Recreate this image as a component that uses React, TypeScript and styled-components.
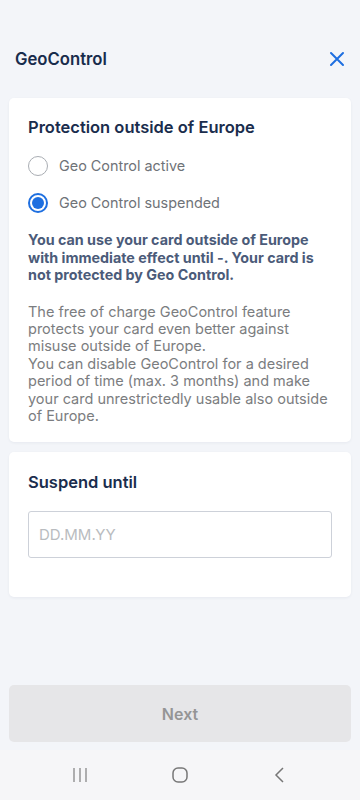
import styled, { createGlobalStyle } from 'styled-components'

const GlobalStyle = createGlobalStyle`
  html, body {
    margin: 0;
    padding: 0;
    background: #f3f5f9;
  }

  body {
    font-family: Inter, 'Noto Sans', sans-serif;
  }
`

const Screen = styled.div`
  display: flex;
  flex-direction: column;

  height: 800px;
  width: 360px;

  background: #f3f5f9;
`

const StatusBar = styled.div`
  height: 37px;
`

const Header = styled.header`
  display: flex;
  justify-content: space-between;
  align-items: center;

  padding: 0 14px 0 15px;

  height: 44px;
`

const HeaderTitle = styled.h1`
  margin: 0;

  font: 600 16.7px Inter, sans-serif;
  color: #182c4c;
`

const CloseButton = styled.button`
  display: flex;

  border: 0;
  padding: 0;

  background: none;
`

const Content = styled.main`
  display: flex;
  flex-direction: column;
  gap: 10px;

  padding: 17px 9px 0;

  flex: 1;
`

const Card = styled.section`
  border-radius: 5px;

  padding: 18px 19px 18px;

  background: #fff;
  box-shadow: 0 1px 3px rgba(30, 50, 90, 0.06);
`

const CardTitle = styled.h2<{ gap: number }>`
  margin: 0 0 ${(props) => props.gap}px;

  font: 600 16.5px/22px Inter, sans-serif;
  color: #1a2d4d;
`

const RadioRow = styled.label`
  display: flex;
  align-items: center;
  gap: 11px;

  height: 37px;

  font: 400 14.4px Inter, sans-serif;
  color: #6f7378;
`

const RadioCircle = styled.span<{ checked: boolean }>`
  box-sizing: border-box;
  display: flex;
  justify-content: center;
  align-items: center;

  border: ${(props) => (props.checked ? '2px solid #1e6fe0' : '1.5px solid #a9adb3')};
  border-radius: 50%;

  height: 20px;
  width: 20px;

  &::after {
    content: '';

    display: ${(props) => (props.checked ? 'block' : 'none')};

    border-radius: 50%;

    height: 12px;
    width: 12px;

    background: #1e6fe0;
  }
`

const Notice = styled.p`
  margin: 10px 0 0;

  font: 700 14.3px/17.5px Inter, sans-serif;
  color: #4b5b79;
`

const Description = styled.p`
  margin: 19px 0 0;

  font: 400 14.5px/17.4px Inter, sans-serif;
  color: #7b7d80;
`

const SuspendCard = styled(Card)`
  padding: 19px 19px 39px;
`

const DateInput = styled.input`
  box-sizing: border-box;

  border: 1px solid #cdd1d9;
  border-radius: 3px;
  padding: 0 10px;

  height: 47px;
  width: 100%;

  font: 400 15px Inter, sans-serif;
  color: #333;

  background: #fff;

  &::placeholder {
    color: #b9bcc0;
  }
`

const Footer = styled.div`
  padding: 0 9px 8px;
`

const NextButton = styled.button`
  border: 0;
  border-radius: 5px;

  height: 57px;
  width: 100%;

  font: 600 16px Inter, sans-serif;
  color: #959595;

  background: #e6e6e8;
`

const NavBar = styled.nav`
  display: flex;
  justify-content: space-around;
  align-items: center;

  padding: 0 30px;

  height: 50px;

  background: #f6f6f8;
`

const NavIcon = styled.span`
  display: flex;
  justify-content: center;

  width: 40px;
`

export const App = () => {
  return (
    <Screen>
      <GlobalStyle />
      <StatusBar />
      <Header>
        <HeaderTitle>GeoControl</HeaderTitle>
        <CloseButton aria-label="Close">
          <svg width="18" height="18" viewBox="0 0 18 18">
            <path d="M3 3 L15 15 M15 3 L3 15" stroke="#1e6fe0" strokeWidth="2" strokeLinecap="round" />
          </svg>
        </CloseButton>
      </Header>
      <Content>
        <Card>
          <CardTitle gap={9}>Protection outside of Europe</CardTitle>
          <RadioRow>
            <RadioCircle checked={false} />
            Geo Control active
          </RadioRow>
          <RadioRow>
            <RadioCircle checked />
            Geo Control suspended
          </RadioRow>
          <Notice>
            You can use your card outside of Europe with immediate effect until -. Your card is not
            protected by Geo Control.
          </Notice>
          <Description>
            The free of charge GeoControl feature protects your card even better against misuse
            outside of Europe.
            <br />
            You can disable GeoControl for a desired period of time (max. 3 months) and make your
            card unrestrictedly usable also outside of Europe.
          </Description>
        </Card>
        <SuspendCard>
          <CardTitle gap={18}>Suspend until</CardTitle>
          <DateInput placeholder="DD.MM.YY" />
        </SuspendCard>
      </Content>
      <Footer>
        <NextButton disabled>Next</NextButton>
      </Footer>
      <NavBar>
        <NavIcon>
          <svg width="16" height="16" viewBox="0 0 16 16">
            <path d="M2 1 V15 M8 1 V15 M14 1 V15" stroke="#888" strokeWidth="1.3" />
          </svg>
        </NavIcon>
        <NavIcon>
          <svg width="18" height="18" viewBox="0 0 18 18">
            <rect x="2" y="2" width="14" height="14" rx="5" fill="none" stroke="#777" strokeWidth="1.5" />
          </svg>
        </NavIcon>
        <NavIcon>
          <svg width="16" height="16" viewBox="0 0 16 16">
            <path d="M11 1 L4 8 L11 15" fill="none" stroke="#777" strokeWidth="1.5" />
          </svg>
        </NavIcon>
      </NavBar>
    </Screen>
  )
}

export default App
